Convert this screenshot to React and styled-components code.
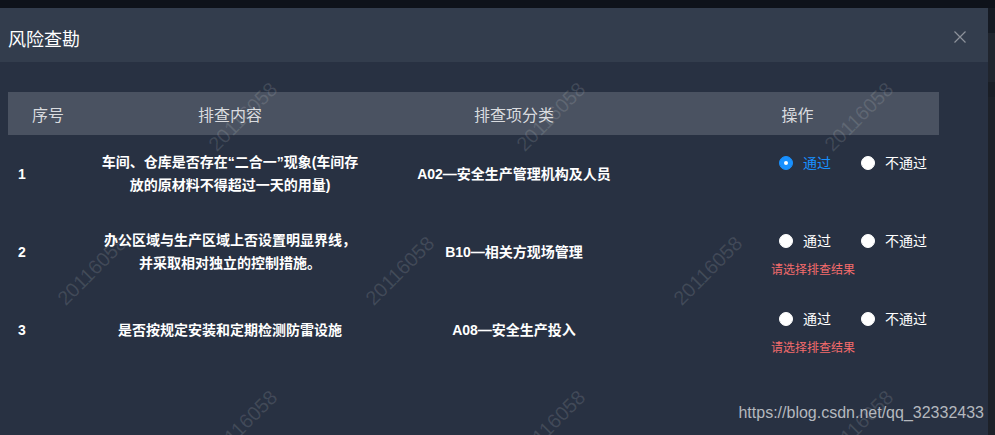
import React from "react";
import styled, {createGlobalStyle} from "styled-components";

const GlobalStyle = createGlobalStyle`
    html, body {
        margin: 0;
        padding: 0;
        background: #1d2129;
    }
    body {
        font-family: "Liberation Sans", "Noto Sans CJK SC", sans-serif;
    }
`;

const rows = [
    {
        id: 1,
        content: '车间、仓库是否存在“二合一”现象(车间存放的原材料不得超过一天的用量)',
        category: 'A02—安全生产管理机构及人员',
        result: 'pass'
    },
    {
        id: 2,
        content: '办公区域与生产区域上否设置明显界线，并采取相对独立的控制措施。',
        category: 'B10—相关方现场管理',
        result: null
    },
    {
        id: 3,
        content: '是否按规定安装和定期检测防雷设施',
        category: 'A08—安全生产投入',
        result: null
    }
];

const sideBlocks = [
    {h: 25, bg: '#151a23'},
    {h: 49, bg: '#20252e'},
    {h: 15, bg: '#1a1e26'},
    {h: 0, bg: '#1d2129'}
];

// watermark grid: staggered rows, only the ones that reach the page
const marks = [];
[117, 271, 425].forEach((y, r) => {
    const start = r % 2 ? 92 : 243;
    for (let k = 0; k < 4; k++) {
        const x = start + 308 * k;
        if (x < 1000) marks.push({x, y});
    }
});

const Radio = ({checked, label}) => (
    <RadioItem>
        <RadioCircle $checked={checked}/>
        <RadioLabel $checked={checked}>{label}</RadioLabel>
    </RadioItem>
);

const App = () => {
    return (
        <Page>
            <GlobalStyle/>
            <TopBar/>
            <Main>
                <Dialog>
                    <Header>
                        <Title>风险查勘</Title>
                        <CloseBtn>
                            <svg width="12" height="12" viewBox="0 0 12 12">
                                <path d="M0.5 0.5 L11.5 11.5 M11.5 0.5 L0.5 11.5" stroke="#8d929b" strokeWidth="1.2" fill="none"/>
                            </svg>
                        </CloseBtn>
                    </Header>
                    <Body>
                        <Table>
                            <colgroup>
                                <col style={{width: 80}}/>
                                <col style={{width: 284}}/>
                                <col style={{width: 284}}/>
                                <col style={{width: 283}}/>
                            </colgroup>
                            <thead>
                            <HeadRow>
                                <TH>序号</TH>
                                <TH>排查内容</TH>
                                <TH>排查项分类</TH>
                                <TH>操作</TH>
                            </HeadRow>
                            </thead>
                            <tbody>
                            {rows.map((row) => (
                                <tr key={row.id}>
                                    <TD $align="left">{row.id}</TD>
                                    <TD>{row.content}</TD>
                                    <TD>{row.category}</TD>
                                    <TD $align="left">
                                        <FormItem>
                                            <RadioGroup>
                                                <Radio checked={row.result === 'pass'} label="通过"/>
                                                <Radio checked={row.result === 'fail'} label="不通过"/>
                                            </RadioGroup>
                                            {!row.result && <ErrorText>请选择排查结果</ErrorText>}
                                        </FormItem>
                                    </TD>
                                </tr>
                            ))}
                            </tbody>
                        </Table>
                    </Body>
                </Dialog>
                <Side>
                    {sideBlocks.map((b, i) => <SideBlock key={i} $h={b.h} $bg={b.bg}/>)}
                </Side>
            </Main>
            <MarkLayer>
                {marks.map((m, i) => (
                    <Mark key={i} style={{left: m.x, top: m.y}}>20116058</Mark>
                ))}
            </MarkLayer>
            <BlogMark>https://blog.csdn.net/qq_32332433</BlogMark>
        </Page>
    );
};

export default App;


const Page = styled.div`
    position: relative;
    height: 100vh;
    display: flex;
    flex-direction: column;
    overflow: hidden;
`;

const TopBar = styled.div`
    height: 8px;
    flex: none;
    background: #0e121a;
`;

const Main = styled.div`
    flex: 1;
    display: flex;
    min-height: 0;
`;

const Dialog = styled.div`
    width: 988px;
    flex: none;
    display: flex;
    flex-direction: column;
    background: #283142;
`;

const Header = styled.div`
    display: flex;
    align-items: flex-start;
    justify-content: space-between;
    padding: 20px 22px 10px 8px;
    background: #333d4d;
`;

const Title = styled.div`
    font-size: 18px;
    line-height: 24px;
    color: #ffffff;
`;

const CloseBtn = styled.div`
    display: flex;
    margin-top: 3px;
    cursor: pointer;
`;

const Body = styled.div`
    flex: 1;
    padding: 30px 8px 0;
`;

const Table = styled.table`
    width: 931px;
    border-collapse: collapse;
    table-layout: fixed;
`;

const HeadRow = styled.tr`
    background: #4a5261;
`;

const TH = styled.th`
    height: 43px;
    padding: 0;
    font-size: 16px;
    font-weight: normal;
    color: #d9dbdf;
    text-align: center;
`;

const TD = styled.td`
    padding: 8px 10px;
    font-size: 14px;
    line-height: 23px;
    font-weight: bold;
    color: #ffffff;
    text-align: ${props => props.$align || 'center'};
    vertical-align: middle;
`;

const FormItem = styled.div`
    position: relative;
    height: 40px;
    margin-bottom: 22px;
    padding-left: 105px;
    display: flex;
    align-items: center;
    white-space: nowrap;
`;

const RadioGroup = styled.div`
    display: flex;
    align-items: center;
    flex: none;
    margin-left: 8px;
`;

const RadioItem = styled.label`
    display: flex;
    align-items: center;
    flex: none;
    margin-right: 30px;
    cursor: pointer;

    &:last-child {
        margin-right: 0;
    }
`;

const RadioCircle = styled.span`
    position: relative;
    flex: none;
    width: 14px;
    height: 14px;
    box-sizing: border-box;
    border-radius: 50%;
    background: ${props => props.$checked ? '#1890ff' : '#ffffff'};
    border: 1px solid ${props => props.$checked ? '#1890ff' : '#ffffff'};

    &::after {
        content: "";
        display: ${props => props.$checked ? 'block' : 'none'};
        position: absolute;
        left: 50%;
        top: 50%;
        width: 4px;
        height: 4px;
        border-radius: 50%;
        background: #ffffff;
        transform: translate(-50%, -50%);
    }
`;

const RadioLabel = styled.span`
    margin-left: 10px;
    font-size: 14px;
    line-height: 1;
    font-weight: normal;
    color: ${props => props.$checked ? '#1890ff' : '#ffffff'};
`;

const ErrorText = styled.div`
    position: absolute;
    top: 100%;
    left: 105px;
    padding-top: 2px;
    font-size: 12px;
    line-height: 14px;
    font-weight: normal;
    color: #f56c6c;
`;

const Side = styled.div`
    flex: 1;
    display: flex;
    flex-direction: column;
`;

const SideBlock = styled.div`
    height: ${props => props.$h}px;
    flex: ${props => props.$h ? 'none' : '1'};
    background: ${props => props.$bg};
`;

const MarkLayer = styled.div`
    position: absolute;
    inset: 0;
    pointer-events: none;
`;

const Mark = styled.span`
    position: absolute;
    transform: translate(-50%, -50%) rotate(-45deg);
    font-size: 20px;
    color: rgba(255, 255, 255, 0.12);
    white-space: nowrap;
`;

const BlogMark = styled.div`
    position: absolute;
    right: 11px;
    bottom: 12px;
    font-size: 16px;
    line-height: 20px;
    color: #b4b8be;
    pointer-events: none;
`;
